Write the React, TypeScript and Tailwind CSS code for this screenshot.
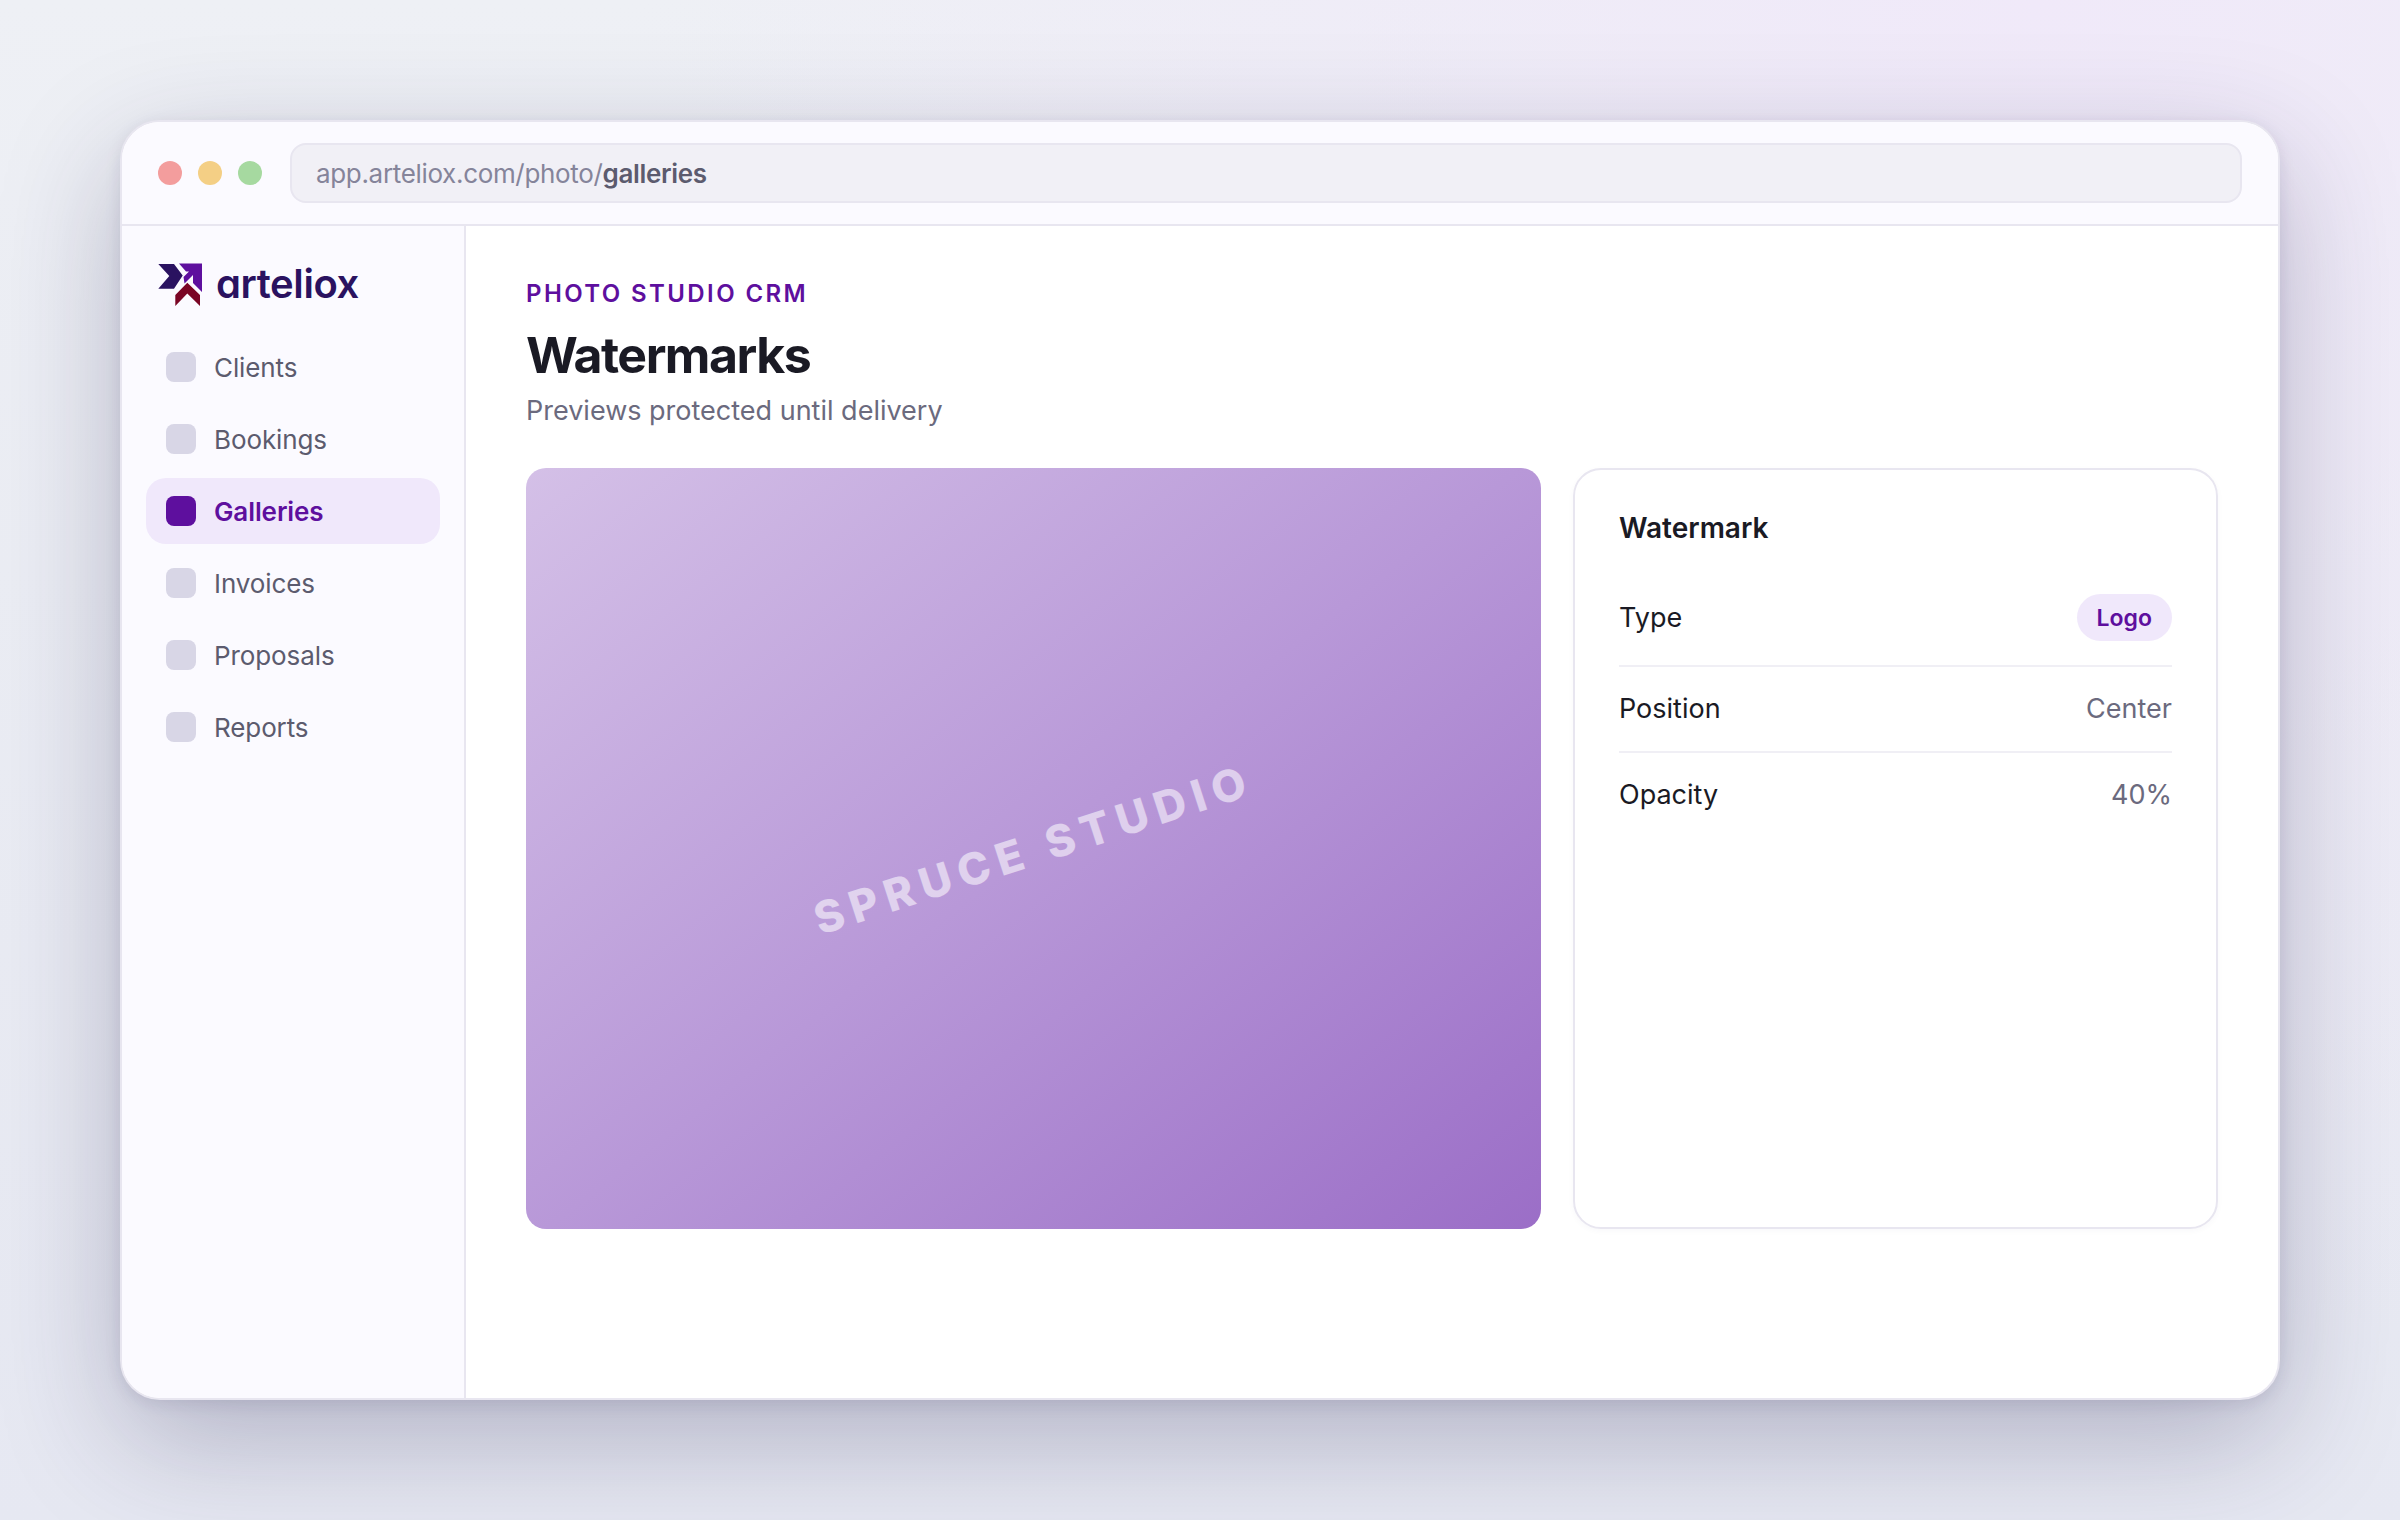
const NAV_ITEMS = ['Clients', 'Bookings', 'Galleries', 'Invoices', 'Proposals', 'Reports'];
const ACTIVE_ITEM = 'Galleries';

function Logo() {
  return (
    <svg viewBox="0 0 44 44" className="h-[44px] w-[44px] shrink-0">
      <path d="M21 1.5H44V30L35 21V13L26.5 21.5L25.5 15L31 9.5H28Z" fill="#5e0f9e" />
      <path d="M0.3 2H16L24.7 13.5L16 26.7H0.3L11.3 14Z" fill="#2a1260" />
      <path d="M29.3 20.7L42 33V44L29.3 31.5L17.3 44V33Z" fill="#7a0524" />
    </svg>
  );
}

function Row({ label, children, last }: { label: string; children: React.ReactNode; last?: boolean }) {
  return (
    <div className={`flex items-center justify-between py-[24px] text-[27px] leading-[36px] text-[#1a1a24] ${last ? '' : 'border-b-2 border-[#f0eff5]'}`}>
      <span>{label}</span>
      {children}
    </div>
  );
}

export default function App() {
  return (
    <div className="min-h-[1520px] w-full bg-[radial-gradient(circle_at_85%_0%,#f0e9f9_0%,rgba(240,233,249,0)_55%),linear-gradient(180deg,#eef0f5_0%,#e6e8f2_100%)] p-[120px] font-['Inter',sans-serif]">
      <div className="flex h-[1280px] flex-col overflow-hidden rounded-[40px] border-2 border-[#e8e6f0] bg-white shadow-[0_40px_120px_rgba(40,35,80,0.28),0_4px_16px_rgba(40,30,80,0.1)]">
        {/* Browser chrome */}
        <div className="flex h-[104px] shrink-0 items-center gap-[28px] border-b-2 border-[#e8e6f0] bg-[#fbfaff] px-[36px]">
          <div className="flex gap-[16px]">
            <div className="h-[24px] w-[24px] rounded-full bg-[#f39d9d]" />
            <div className="h-[24px] w-[24px] rounded-full bg-[#f4cf85]" />
            <div className="h-[24px] w-[24px] rounded-full bg-[#a6d9a0]" />
          </div>
          <div className="flex h-[60px] flex-1 items-center rounded-[16px] border-2 border-[#e8e6f0] bg-[#f1f0f6] px-[24px] text-[26px] tracking-[-0.33px] text-[#85849a]">
            app.arteliox.com/photo/<span className="font-semibold text-[#5c5b6e]">galleries</span>
          </div>
        </div>

        <div className="flex min-h-0 flex-1">
          {/* Sidebar */}
          <aside className="flex w-[344px] shrink-0 flex-col border-r-2 border-[#e8e6f0] bg-[#fbfaff] px-[24px] pt-[36px]">
            <div className="mb-[28px] flex items-center gap-[14px] pl-[12px]">
              <Logo />
              <span className="text-[40px] font-semibold leading-none tracking-[-0.01em] text-[#2a1260] [font-feature-settings:'cv11']">arteliox</span>
            </div>
            <nav className="flex flex-col gap-[6px]">
              {NAV_ITEMS.map((item) => {
                const active = item === ACTIVE_ITEM;
                return (
                  <div
                    key={item}
                    className={`flex h-[66px] items-center gap-[18px] rounded-[20px] px-[20px] text-[26px] tracking-[-0.1px] ${active ? 'bg-[#f0e8fb] font-semibold text-[#5e0f9e]' : 'text-[#5c5b6e]'}`}
                  >
                    <div className={`h-[30px] w-[30px] rounded-[8px] ${active ? 'bg-[#5e0f9e]' : 'bg-[#d8d6e6]'}`} />
                    {item}
                  </div>
                );
              })}
            </nav>
          </aside>

          {/* Main */}
          <main className="flex min-w-0 flex-1 flex-col px-[60px] pt-[50px]">
            <div className="text-[24px] font-semibold leading-[36px] tracking-[0.1em] text-[#5e0f9e]">PHOTO STUDIO CRM</div>
            <h1 className="mt-[13px] text-[50px] font-bold leading-[60px] tracking-[-0.03em] text-[#1a1a24]">Watermarks</h1>
            <p className="mt-[6px] text-[27px] leading-[40px] text-[#6b6a7e]">Previews protected until delivery</p>

            <div className="mt-[37px] grid h-[761px] grid-cols-[1015px_1fr] gap-[32px]">
              <div className="flex items-center justify-center overflow-hidden rounded-[20px] bg-[linear-gradient(142deg,#d4c0e7_0%,#b898d8_50%,#9b6ec7_100%)]">
                <span className="-rotate-[18deg] text-[44px] font-extrabold tracking-[0.178em] text-white/55">SPRUCE STUDIO</span>
              </div>
              <div className="rounded-[28px] border-2 border-[#e8e6f0] px-[44px] pt-[38px] shadow-[0_2px_6px_rgba(40,30,80,0.03)]">
                <div className="text-[28px] font-semibold leading-[40px] text-[#1a1a24]">Watermark</div>
                <div className="mt-[22px] flex flex-col">
                  <Row label="Type">
                    <span className="flex h-[47px] items-center rounded-full bg-[#f0e8fb] px-[20px] text-[23px] font-semibold text-[#5e0f9e]">Logo</span>
                  </Row>
                  <Row label="Position">
                    <span className="text-[#6b6a7e]">Center</span>
                  </Row>
                  <Row label="Opacity" last>
                    <span className="text-[#6b6a7e]">40%</span>
                  </Row>
                </div>
              </div>
            </div>
          </main>
        </div>
      </div>
    </div>
  );
}
